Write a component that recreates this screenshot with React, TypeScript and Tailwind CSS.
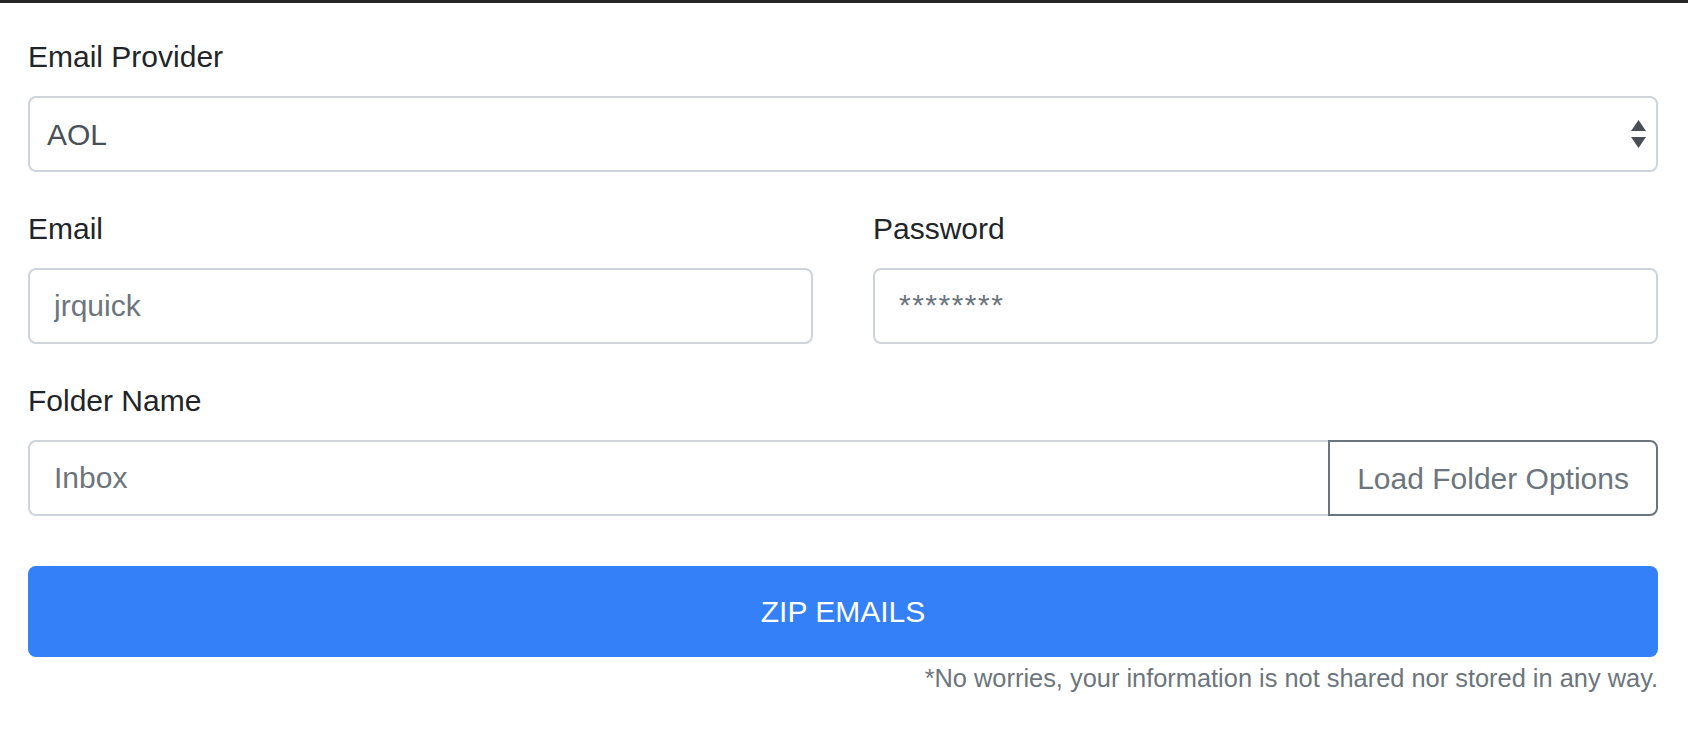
import React from 'react';

const font = { fontFamily: '"Liberation Sans", Arial, sans-serif' };

function Label({ children }: { children: React.ReactNode }) {
  return (
    <label className="block text-[30px] leading-[46px] text-[#212529] mb-[16px]">
      {children}
    </label>
  );
}

function SelectArrows() {
  return (
    <svg width="15" height="29" viewBox="0 0 15 29" className="block">
      <path d="M7.5 0 L15 11 L0 11 Z" fill="#4a4f57" />
      <path d="M0 17 L15 17 L7.5 28 Z" fill="#4a4f57" />
    </svg>
  );
}

export default function App() {
  return (
    <div className="min-h-screen bg-white border-t-[3px] border-[#262626]" style={font}>
      <form
        className="pl-[28px] pr-[30px] pt-[31px]"
        onSubmit={(e) => e.preventDefault()}
      >
        <div className="mb-[34px]">
          <Label>Email Provider</Label>
          <div className="h-[76px] border-2 border-[#ced4da] rounded-[8px] flex items-center justify-between pl-[17px] pr-[10px] bg-white">
            <span className="text-[30px] text-[#495057]">AOL</span>
            <SelectArrows />
          </div>
        </div>

        <div className="grid grid-cols-2 gap-x-[60px] mb-[34px]">
          <div>
            <Label>Email</Label>
            <input
              className="w-full h-[76px] border-2 border-[#ced4da] rounded-[8px] px-[24px] text-[30px] text-[#495057] placeholder:text-[#6c757d] outline-none"
              placeholder="jrquick"
            />
          </div>
          <div>
            <Label>Password</Label>
            <div className="h-[76px] border-2 border-[#ced4da] rounded-[8px] px-[24px] flex items-center">
              <span className="text-[30px] tracking-[1.5px] text-[#6c757d] -mt-[4px]">********</span>
            </div>
          </div>
        </div>

        <div className="mb-[50px]">
          <Label>Folder Name</Label>
          <div className="flex h-[76px]">
            <input
              className="flex-1 min-w-0 h-full border-2 border-r-0 border-[#ced4da] rounded-l-[8px] px-[24px] text-[30px] text-[#495057] placeholder:text-[#6c757d] outline-none"
              placeholder="Inbox"
            />
            <button
              type="button"
              className="h-full border-2 border-[#6c757d] rounded-r-[8px] px-[27px] text-[30px] text-[#6c757d] bg-white"
            >
              Load Folder Options
            </button>
          </div>
        </div>

        <button
          type="submit"
          className="w-full h-[91px] rounded-[8px] bg-[#3380f8] text-white text-[30px]"
        >
          ZIP EMAILS
        </button>
        <p className="text-right text-[25.4px] leading-[38px] text-[#6c757d] mt-[2px]">
          *No worries, your information is not shared nor stored in any way.
        </p>
      </form>
    </div>
  );
}
